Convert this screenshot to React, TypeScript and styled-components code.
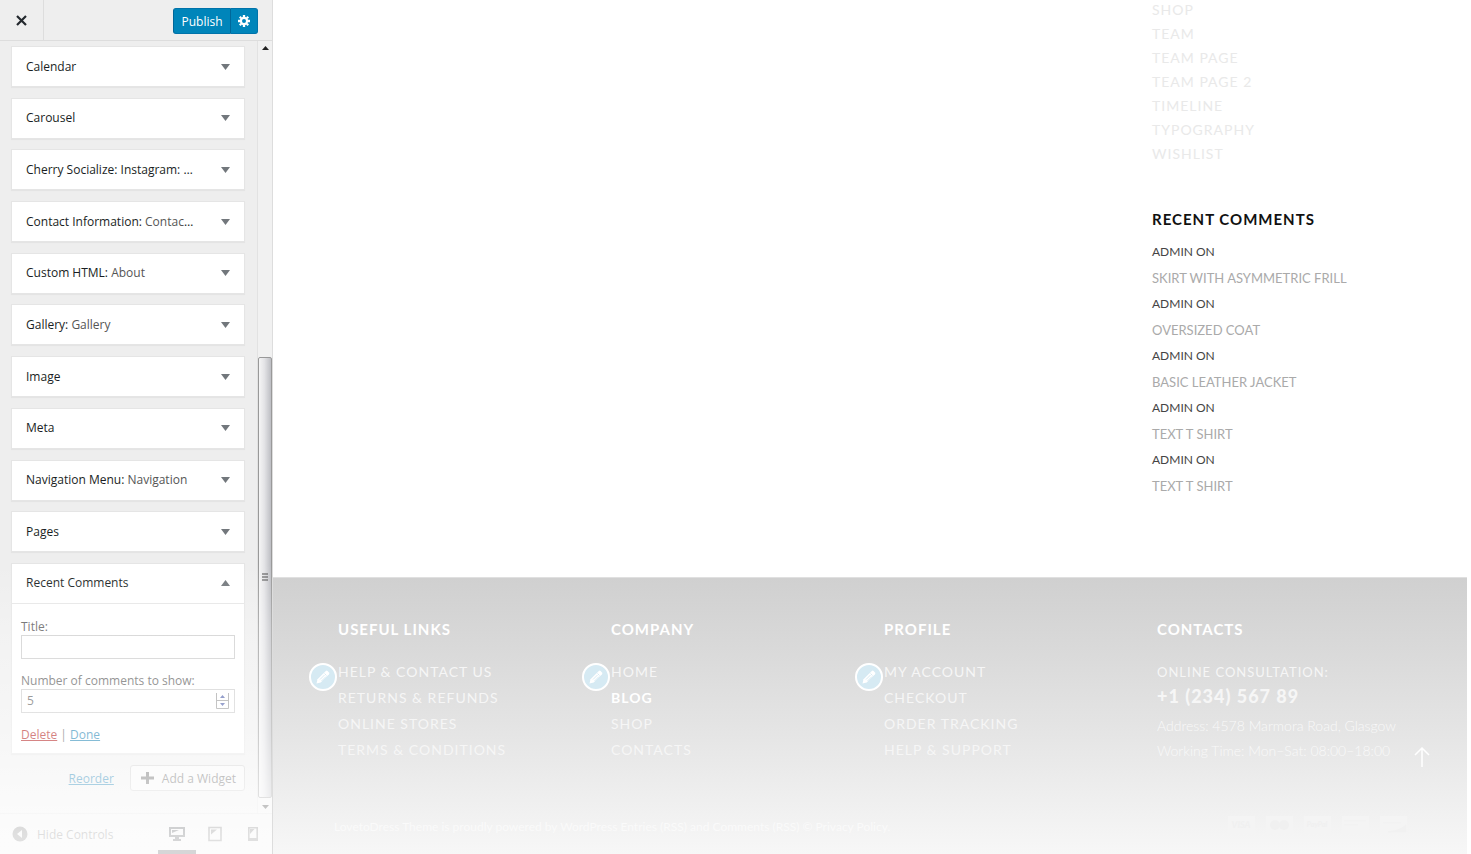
import React from 'react';
import styled, { createGlobalStyle, css } from 'styled-components';

const GlobalStyle = createGlobalStyle`
  *, *::before, *::after { box-sizing: border-box; }
  html, body { margin: 0; background: #fff; }
  body { font-family: 'Open Sans', 'Noto Sans', sans-serif; font-size: 12px; color: #191e23; }
  ul, h2, h3, p { margin: 0; padding: 0; list-style: none; }
  button, input { font-family: inherit; font-size: inherit; color: inherit; }
`;

const Page = styled.div`
  display: flex;
  min-height: 100vh;
  overflow: hidden;
`;

/* ---------- Customizer controls ---------- */

const Controls = styled.aside`
  position: relative;
  display: flex;
  flex-direction: column;
  flex: 0 0 273px;
  background: #eee;
  border-right: 1px solid #ddd;
`;

const Fade = styled.div`
  position: absolute;
  inset: 0;
  pointer-events: none;
  background: linear-gradient(
    to bottom,
    rgba(255, 255, 255, 0) 66%,
    rgba(255, 255, 255, 0.26) 74%,
    rgba(255, 255, 255, 0.5) 86%,
    rgba(255, 255, 255, 0.68) 92%,
    rgba(255, 255, 255, 0.82) 98%
  );
`;

const TopBar = styled.header`
  display: flex;
  align-items: center;
  justify-content: space-between;
  height: 41px;
  padding-right: 14px;
  border-bottom: 1px solid #ddd;
`;

const CloseButton = styled.button`
  display: grid;
  place-items: center;
  width: 44px;
  height: 40px;
  padding: 0;
  border: 0;
  border-right: 1px solid #ddd;
  background: none;
`;

const PublishGroup = styled.div`
  display: flex;
  padding-top: 2px;
`;

const PrimaryButton = styled.button<{ $side: 'left' | 'right' }>`
  display: grid;
  place-items: center;
  height: 26px;
  width: ${p => (p.$side === 'left' ? 57 : 28)}px;
  padding: 0;
  border: 1px solid #0073aa;
  border-left-color: #006799;
  ${p => p.$side === 'left' && css`border-right-width: 0;`}
  border-radius: ${p => (p.$side === 'left' ? '3px 0 0 3px' : '0 3px 3px 0')};
  background: #0085ba;
  color: #fff;
  font-size: 12px;
`;

const Body = styled.div`
  display: flex;
  flex: 1;
`;

const Panel = styled.div`
  display: flex;
  flex: 1;
  flex-direction: column;
  padding: 5px 12px 22px 11px;
`;

const WidgetList = styled.ul`
  display: flex;
  flex: 1;
  flex-direction: column;
  justify-content: space-between;
`;

const Widget = styled.li`
  border: 1px solid #e5e5e5;
  background: #fff;
  box-shadow: 0 1px 1px rgba(0, 0, 0, 0.04);
`;

const WidgetHead = styled.button`
  display: flex;
  align-items: center;
  justify-content: space-between;
  width: 100%;
  height: 39px;
  padding: 0 14px;
  border: 0;
  background: none;
  text-align: left;
  font-weight: 500;
`;

const WidgetTitle = styled.span`
  white-space: nowrap;
  line-height: 20px;
`;

const InTitle = styled.span`
  color: #555;
  font-weight: 400;
`;

const WidgetForm = styled.form`
  display: flex;
  flex-direction: column;
  padding: 15px 9px 10px;
  border-top: 1px solid #e5e5e5;
  color: #555;
`;

const FieldLabel = styled.label`
  line-height: 16px;
`;

const NumberWrap = styled.div`
  position: relative;
  display: flex;
`;

const Field = styled.input`
  width: 100%;
  height: 24px;
  margin: 0 0 14px;
  padding: 0 5px;
  border: 1px solid #ccc;
  border-radius: 0;
  background: #fff;
  appearance: textfield;
  &::-webkit-inner-spin-button { appearance: none; }
`;

const Spinner = styled.svg`
  position: absolute;
  top: 4px;
  right: 6px;
`;

const FormLinks = styled.p`
  line-height: 16px;
`;

const TextLink = styled.a<{ $danger?: boolean }>`
  color: ${p => (p.$danger ? '#a00' : '#0073aa')};
`;

const PanelActions = styled.div`
  display: flex;
  align-items: center;
  justify-content: flex-end;
  gap: 16px;
  padding-top: 11px;
`;

const AddButton = styled.button`
  display: flex;
  align-items: center;
  gap: 8px;
  height: 26px;
  padding: 0 8px 0 10px;
  border: 1px solid #ccc;
  border-radius: 3px;
  background: #f7f7f7;
  color: #555;
`;

const ScrollTrack = styled.div`
  display: flex;
  flex-direction: column;
  align-items: center;
  width: 15px;
  padding: 5px 0 4px;
  border-left: 1px solid #e2e2e2;
  background: #f1f1f1;
`;

const ScrollArrow = styled.svg`
  flex: none;
`;

const ScrollGap = styled.div`
  flex: 307;
`;

const ScrollThumb = styled.div`
  display: grid;
  flex: 440;
  place-items: center;
  width: 14px;
  margin-bottom: 7px;
  border: 1px solid #999;
  border-radius: 2px;
  background: linear-gradient(to right, #f5f5f5, #e3e3e6 45%, #bdbec3);
`;

const BottomBar = styled.footer`
  display: flex;
  align-items: center;
  justify-content: space-between;
  height: 41px;
  padding: 0 12px;
  border-top: 1px solid #ddd;
`;

const HideButton = styled.button`
  display: flex;
  align-items: center;
  gap: 9px;
  padding: 0;
  border: 0;
  background: none;
  color: #555;
`;

const Devices = styled.div`
  display: flex;
`;

const DeviceButton = styled.button<{ $active?: boolean }>`
  display: grid;
  place-items: center;
  width: 38px;
  height: 40px;
  padding: 4px 0 0;
  border: 0;
  border-bottom: 4px solid ${p => (p.$active ? '#191e23' : 'transparent')};
  background: none;
  color: ${p => (p.$active ? '#191e23' : '#555')};
  &:last-child { margin-right: -12px; }
`;

/* ---------- Site preview ---------- */

const Preview = styled.main`
  display: flex;
  flex: 1;
  flex-direction: column;
  min-width: 0;
  margin-right: 4px;
  font-family: Lato, sans-serif;
`;

const Content = styled.section`
  display: flex;
  flex: 1;
  justify-content: flex-end;
  align-items: flex-end;
  padding: 0 37px 78px 0;
`;

const SideColumn = styled.aside`
  width: 278px;
  text-transform: uppercase;
`;

const PageLinks = styled.ul`
  margin: -3px 0 41px;
`;

const PageLink = styled.a`
  display: block;
  color: #e9e9e9;
  font-size: 14px;
  letter-spacing: 1px;
  line-height: 24px;
  text-decoration: none;
`;

const SideHeading = styled.h2`
  margin-bottom: 8px;
  color: #111;
  font-size: 15px;
  font-weight: 700;
  letter-spacing: 1px;
  line-height: 24px;
`;

const Comment = styled.li`
  color: #444;
  font-size: 12px;
  font-weight: 400;
  line-height: 26px;
`;

const CommentLink = styled.a`
  display: block;
  color: #aaa;
  font-size: 13px;
  font-weight: 400;
  text-decoration: none;
`;

const SiteFooter = styled.footer`
  position: relative;
  padding: 39px 37px 15px 65px;
  border-top: 1px solid #e0e0e0;
  background: linear-gradient(to bottom, #d0d0d0, #dadada 28%, #e4e4e4 54%, #eee 78%, #f7f7f7);
`;

const FooterColumns = styled.div`
  display: grid;
  grid-template-columns: repeat(4, 1fr);
`;

const FooterHeading = styled.h3`
  margin-bottom: 18px;
  color: #fff;
  font-size: 15px;
  font-weight: 700;
  letter-spacing: 1px;
  line-height: 24px;
  text-transform: uppercase;
`;

const FooterMenu = styled.ul`
  position: relative;
`;

const FooterLink = styled.a<{ $current?: boolean }>`
  display: block;
  color: ${p => (p.$current ? '#fff' : '#f6f6f6')};
  font-size: 14px;
  font-weight: ${p => (p.$current ? 700 : 400)};
  letter-spacing: 1px;
  line-height: 26px;
  text-decoration: none;
  text-transform: uppercase;
`;

const EditButton = styled.button`
  position: absolute;
  top: 4px;
  left: -29px;
  display: grid;
  place-items: center;
  width: 28px;
  height: 28px;
  padding: 0;
  border: 2px solid #fff;
  border-radius: 50%;
  background: #d6eaf3;
  color: #fff;
`;

const Consultation = styled.p`
  color: #f6f6f6;
  font-size: 13px;
  letter-spacing: 1px;
  line-height: 26px;
  text-transform: uppercase;
`;

const Phone = styled.p`
  color: #f6f6f6;
  font-size: 18px;
  font-weight: 900;
  letter-spacing: 1px;
  line-height: 22px;
  margin-bottom: 6px;
`;

const ContactLine = styled.p`
  color: #f9f9f9;
  font-size: 14px;
  font-weight: 300;
  line-height: 25px;
  white-space: nowrap;
`;

const FooterBottom = styled.div`
  display: flex;
  align-items: center;
  justify-content: space-between;
  margin: 52px 23px 0 -4px;
`;

const Copyright = styled.p`
  color: #fafafa;
  font-size: 12px;
  font-weight: 400;
  line-height: 24px;
`;

const Cards = styled.div`
  display: flex;
  gap: 11px;
  padding-bottom: 6px;
`;

const TopLink = styled.a`
  position: absolute;
  right: 37px;
  bottom: 87px;
  line-height: 0;
`;

/* ---------- Icons ---------- */

const CaretDown = () => (
  <svg width="9" height="6" viewBox="0 0 9 6"><path d="M0 0h9L4.500 6z" fill="#72777c" /></svg>
);

const CaretUp = () => (
  <svg width="9" height="6" viewBox="0 0 9 6"><path d="M0 6h9L4.500 0z" fill="#72777c" /></svg>
);

const Pencil = () => (
  <svg width="14" height="14" viewBox="0 0 14 14" aria-hidden="true">
    <path d="M0.500 13.500 1.500 9.300 9.800 1Q10.700 0.200 11.600 1L13 2.400Q13.800 3.300 13 4.200L4.700 12.500z" fill="currentColor" />
    <path d="M4 9.500 8.500 5M5.500 11 10 6.500M8.500 3.500l2 2" stroke="#cfe6f0" strokeWidth="0.800" />
  </svg>
);

const Gear = () => (
  <svg width="12" height="12" viewBox="0 0 12 12" aria-hidden="true">
    <g fill="none" stroke="#fff">
      <circle cx="6" cy="6" r="3.100" strokeWidth="2.200" />
      <path d="M6 0v2M6 10v2M0 6h2M10 6h2M1.800 1.800l1.400 1.400M8.800 8.800l1.400 1.400M10.200 1.800 8.800 3.200M3.200 8.800 1.800 10.200" strokeWidth="2.300" />
    </g>
  </svg>
);

const cardMarks = [
  <text key="v" x="13" y="12" textAnchor="middle" fontSize="9" fontWeight="900" fontStyle="italic" fill="#f0f0f0">VISA</text>,
  <g key="m" fill="#f0f0f0"><circle cx="9" cy="9" r="5" /><circle cx="18" cy="9" r="5" /></g>,
  <text key="p" x="13" y="11" textAnchor="middle" fontSize="7" fontWeight="900" fontStyle="italic" fill="#f0f0f0">PayPal</text>,
  <path key="a" d="M2 5h22M2 9h14" stroke="#f1f1f1" />,
  <path key="d" d="M3 7h18M8 16Q20 15 26 9v7z" stroke="#f1f1f1" fill="#f1f1f1" />,
];
const cardNames = ['Visa', 'Maestro', 'PayPal', 'American Express', 'Discover'];

/* ---------- Data ---------- */

const widgets: { name: string; title?: string; cut?: boolean }[] = [
  { name: 'Calendar' },
  { name: 'Carousel' },
  { name: 'Cherry Socialize: Instagram: ', cut: true },
  { name: 'Contact Information:', title: 'Contac', cut: true },
  { name: 'Custom HTML:', title: 'About' },
  { name: 'Gallery:', title: 'Gallery' },
  { name: 'Image' },
  { name: 'Meta' },
  { name: 'Navigation Menu:', title: 'Navigation' },
  { name: 'Pages' },
];

const pages = ['Shop', 'Team', 'Team page', 'Team page 2', 'Timeline', 'Typography', 'Wishlist'];

const comments = ['Skirt with asymmetric frill', 'Oversized coat', 'Basic leather jacket', 'Text T shirt', 'Text T shirt'];

const menus = [
  { heading: 'Useful links', links: ['Help & contact us', 'Returns & refunds', 'Online stores', 'Terms & conditions'] },
  { heading: 'Company', links: ['Home', 'Blog', 'Shop', 'Contacts'] },
  { heading: 'Profile', links: ['My account', 'Checkout', 'Order tracking', 'Help & support'] },
];

export default function App() {
  return (
    <Page>
      <GlobalStyle />
      <Controls>
        <TopBar>
          <CloseButton aria-label="Close">
            <svg width="11" height="11" viewBox="0 0 11 11"><path d="M1 1l9 9M10 1l-9 9" stroke="#23282d" strokeWidth="2.200" /></svg>
          </CloseButton>
          <PublishGroup>
            <PrimaryButton $side="left">Publish</PrimaryButton>
            <PrimaryButton $side="right" aria-label="Publish settings"><Gear /></PrimaryButton>
          </PublishGroup>
        </TopBar>
        <Body>
          <Panel>
            <WidgetList>
              {widgets.map(w => (
                <Widget key={w.name}>
                  <WidgetHead>
                    <WidgetTitle>{w.name}{w.title && <InTitle> {w.title}</InTitle>}{w.cut && '…'}</WidgetTitle>
                    <CaretDown />
                  </WidgetHead>
                </Widget>
              ))}
              <Widget>
                <WidgetHead aria-expanded="true">
                  <WidgetTitle>Recent Comments</WidgetTitle>
                  <CaretUp />
                </WidgetHead>
                <WidgetForm>
                  <FieldLabel htmlFor="title">Title:</FieldLabel>
                  <Field id="title" type="text" />
                  <FieldLabel htmlFor="count">Number of comments to show:</FieldLabel>
                  <NumberWrap>
                    <Field id="count" type="number" defaultValue={5} />
                    <Spinner width="13" height="16" viewBox="0 0 13 16" aria-hidden="true">
                      <path d="M.5 0v15.500h12V0M.5 7.500h12" fill="none" stroke="#999" />
                      <path d="M4 5h5L6.500 2zM4 10h5l-2.500 3z" fill="#4a5ba8" />
                    </Spinner>
                  </NumberWrap>
                  <FormLinks>
                    <TextLink href="#delete" $danger>Delete</TextLink> | <TextLink href="#done">Done</TextLink>
                  </FormLinks>
                </WidgetForm>
              </Widget>
            </WidgetList>
            <PanelActions>
              <TextLink href="#reorder">Reorder</TextLink>
              <AddButton>
                <svg width="13" height="12" viewBox="0 0 13 12"><path d="M6.500 0v12M0 6h13" stroke="#555" strokeWidth="3" /></svg>
                Add a Widget
              </AddButton>
            </PanelActions>
          </Panel>
          <ScrollTrack>
            <ScrollArrow width="7" height="4" viewBox="0 0 7 4"><path d="M0 4h7L3.500 0z" fill="#222" /></ScrollArrow>
            <ScrollGap />
            <ScrollThumb>
              <svg width="6" height="8" viewBox="0 0 6 8"><path d="M0 1h6M0 4h6M0 7h6" stroke="#444" /></svg>
            </ScrollThumb>
            <ScrollArrow width="7" height="4" viewBox="0 0 7 4"><path d="M0 0h7L3.500 4z" fill="#222" /></ScrollArrow>
          </ScrollTrack>
        </Body>
        <BottomBar>
          <HideButton>
            <svg width="16" height="16" viewBox="0 0 16 16"><circle cx="8" cy="8" r="7.500" fill="#555" /><path d="M10 4v8L5 8z" fill="#eee" /></svg>
            Hide Controls
          </HideButton>
          <Devices>
            <DeviceButton $active aria-label="Desktop preview">
              <svg width="16" height="16" viewBox="0 0 16 16">
                <path d="M1 2h14v8H1z" fill="none" stroke="currentColor" strokeWidth="2" />
                <path d="M3 4h7L3 7zM6 11h4v2h2v2H4v-2h2z" fill="currentColor" />
              </svg>
            </DeviceButton>
            <DeviceButton aria-label="Tablet preview">
              <svg width="14" height="16" viewBox="0 0 14 16">
                <path d="M1 1.500h12v13H1z" fill="none" stroke="currentColor" strokeWidth="1.600" />
                <path d="M3 3.500h6L3 8.500z" fill="currentColor" />
              </svg>
            </DeviceButton>
            <DeviceButton aria-label="Phone preview">
              <svg width="10" height="16" viewBox="0 0 10 16">
                <path d="M.8 1.800h8.400v12.400H.8z" fill="none" stroke="currentColor" strokeWidth="1.600" />
                <path d="M2 3h4.500L2 8zM1 12h8v2H1z" fill="currentColor" />
              </svg>
            </DeviceButton>
          </Devices>
        </BottomBar>
        <Fade />
      </Controls>

      <Preview>
        <Content>
          <SideColumn>
            <PageLinks>
              {pages.map(p => <li key={p}><PageLink href="#page">{p}</PageLink></li>)}
            </PageLinks>
            <SideHeading>Recent comments</SideHeading>
            <ul>
              {comments.map((c, i) => (
                <Comment key={i}>admin on<CommentLink href="#comment">{c}</CommentLink></Comment>
              ))}
            </ul>
          </SideColumn>
        </Content>
        <SiteFooter>
          <FooterColumns>
            {menus.map(m => (
              <div key={m.heading}>
                <FooterHeading>{m.heading}</FooterHeading>
                <FooterMenu>
                  {m.links.map((l, i) => (
                    <li key={l}>
                      {i === 0 && <EditButton aria-label={`Edit ${m.heading}`}><Pencil /></EditButton>}
                      <FooterLink href="#link" $current={l === 'Blog'}>{l}</FooterLink>
                    </li>
                  ))}
                </FooterMenu>
              </div>
            ))}
            <div>
              <FooterHeading>Contacts</FooterHeading>
              <Consultation>Online consultation:</Consultation>
              <Phone>+1 (234) 567 89</Phone>
              <ContactLine>Address: 4578 Marmora Road, Glasgow</ContactLine>
              <ContactLine>Working Time: Mon–Sat: 08:00–18:00</ContactLine>
            </div>
          </FooterColumns>
          <FooterBottom>
            <Copyright>LovetoDress Theme is proudly powered by WordPress Entries (RSS) and Comments (RSS) © Privacy Policy.</Copyright>
            <Cards>
              {cardMarks.map((mark, i) => (
                <svg key={i} width="27" height="17" viewBox="0 0 27 17" role="img" aria-label={cardNames[i]}>
                  <rect width="27" height="17" fill="#f4f4f4" />
                  {mark}
                </svg>
              ))}
            </Cards>
          </FooterBottom>
          <TopLink href="#top" aria-label="Back to top">
            <svg width="16" height="20" viewBox="0 0 16 20"><path d="M8 20V1M1 8l7-7 7 7" fill="none" stroke="#fff" strokeWidth="1.500" /></svg>
          </TopLink>
        </SiteFooter>
      </Preview>
    </Page>
  );
}
